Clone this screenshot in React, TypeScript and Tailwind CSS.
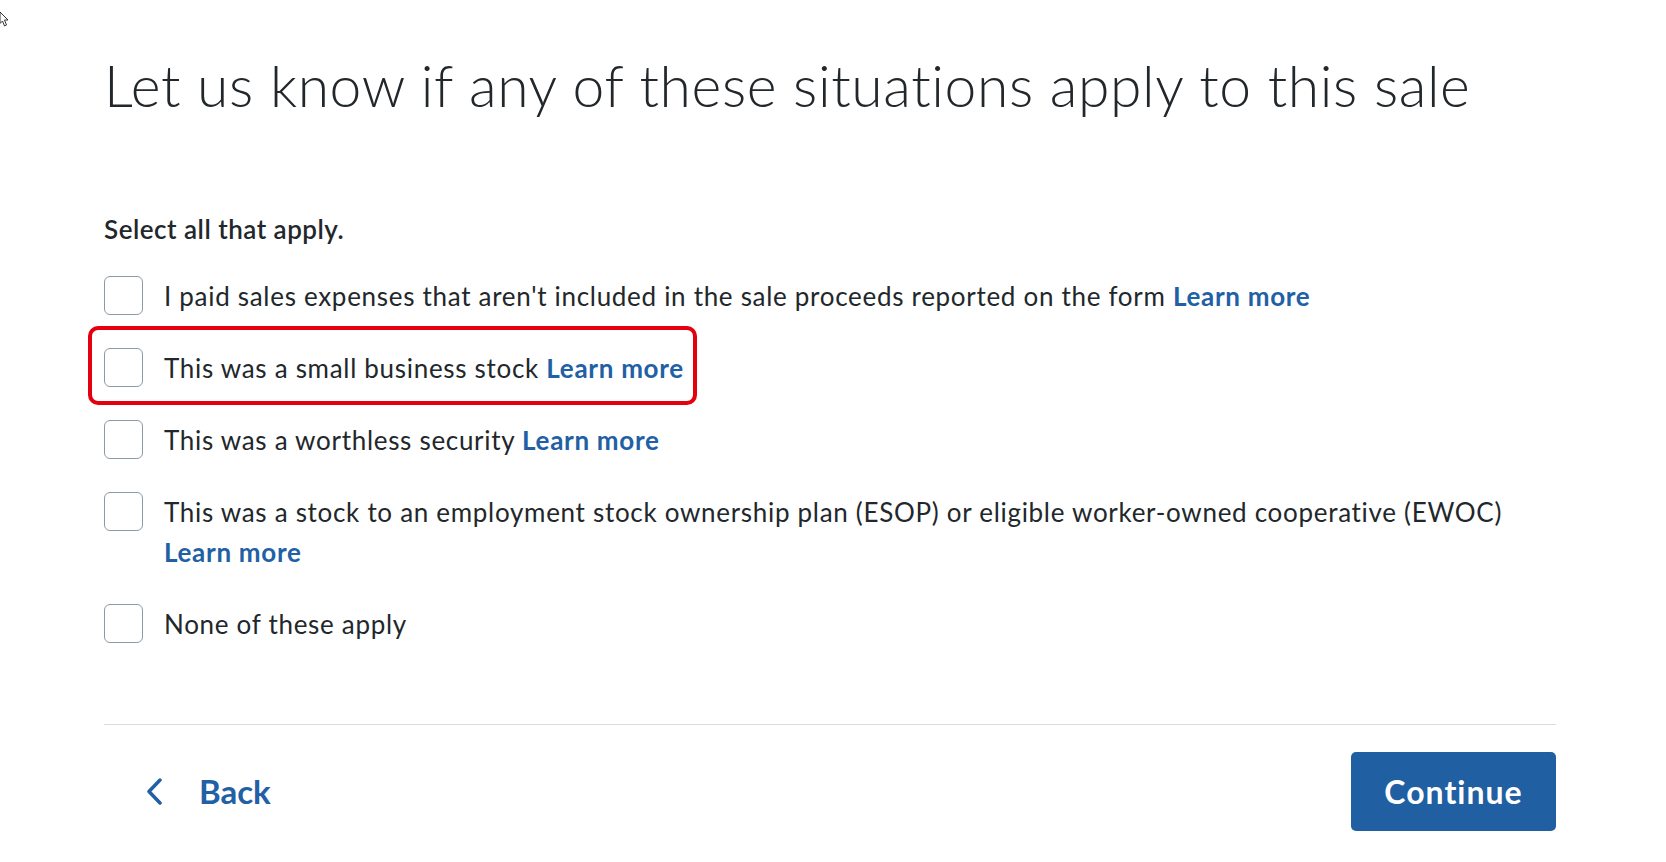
const options = [
  {
    text: "I paid sales expenses that aren't included in the sale proceeds reported on the form",
    highlighted: false,
  },
  { text: "This was a small business stock", highlighted: true },
  { text: "This was a worthless security", highlighted: false },
  {
    text: "This was a stock to an employment stock ownership plan (ESOP) or eligible worker-owned cooperative (EWOC)",
    highlighted: false,
  },
];

const Checkbox = () => (
  <div className="w-[39px] h-[39px] shrink-0 rounded-[6px] border border-[#8c9aa4] bg-white" />
);

const LearnMore = () => (
  <a href="#" className="font-bold text-[#2160a5]">
    Learn more
  </a>
);

export default function App() {
  return (
    <div
      className="relative min-h-[862px] bg-white text-[#22272b]"
      style={{ fontFamily: "Lato, 'Noto Sans', sans-serif" }}
    >
      {/* mouse cursor */}
      <svg className="absolute left-0 top-[12px]" width="10" height="16" viewBox="0 0 10 16">
        <path d="M0 0 L8 8 L4.5 8 L6.5 13 L4.5 14 L2.5 9 L0 11.5 Z" fill="white" stroke="#333" strokeWidth="1" />
      </svg>

      <div className="ml-[104px] pt-[51px] w-[1452px]">
        <h1 className="text-[57px] font-light leading-[68px] tracking-[0.6px]">
          Let us know if any of these situations apply to this sale
        </h1>

        <div className="mt-[95px] text-[26px] font-semibold leading-[30px] tracking-[0.5px]">
          Select all that apply.
        </div>

        <div className="mt-[32px] flex flex-col gap-[32px] text-[26px] leading-[40px] tracking-[0.7px]">
          {options.map((o) => (
            <div key={o.text} className="relative flex items-start gap-[21px]">
              {o.highlighted && (
                <div className="absolute left-[-16px] top-[-22px] w-[609px] h-[79px] rounded-[10px] border-[4px] border-[#e4000f]" />
              )}
              <Checkbox />
              <div className="max-w-[1360px]">
                {o.text} <LearnMore />
              </div>
            </div>
          ))}
          <div className="flex items-start gap-[21px]">
            <Checkbox />
            <div>None of these apply</div>
          </div>
        </div>

        <div className="mt-[80px] border-t border-[#d6dee4]" />

        <div className="flex items-center justify-between pt-[27px]">
          <button className="flex items-center gap-[36px] pl-[42px] text-[33px] font-bold text-[#2160a5]">
            <svg width="17" height="27" viewBox="0 0 17 27" fill="none">
              <path d="M14 2 L3 13.5 L14 25" stroke="#2160a5" strokeWidth="3.5" strokeLinecap="round" strokeLinejoin="round" />
            </svg>
            Back
          </button>
          <button className="w-[205px] h-[79px] rounded-[5px] bg-[#215fa3] text-white text-[32px] font-bold tracking-[1px]">
            Continue
          </button>
        </div>
      </div>
    </div>
  );
}
